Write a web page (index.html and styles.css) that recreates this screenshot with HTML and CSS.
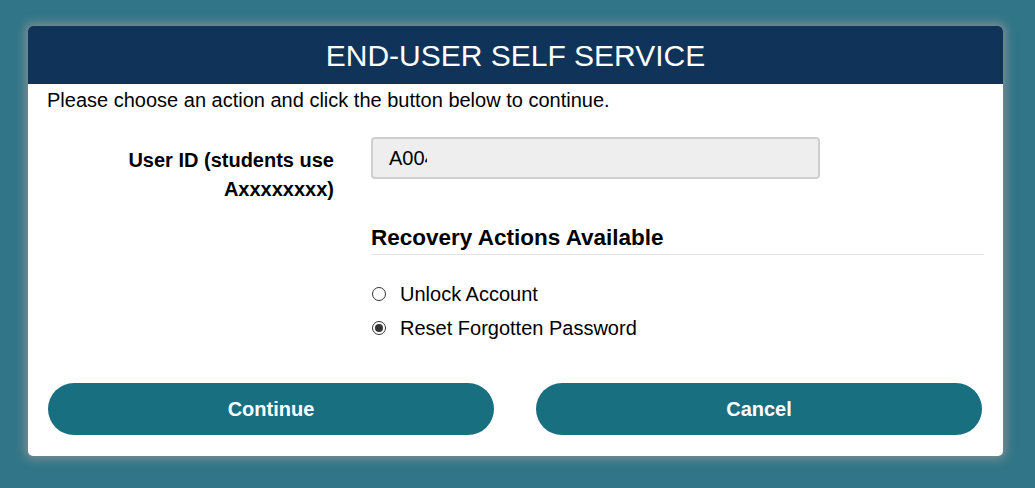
FILE: index.html
```html
<!DOCTYPE html>
<html lang="en">
<head>
<meta charset="utf-8">
<title>End-User Self Service</title>
<link rel="stylesheet" href="styles.css">
</head>
<body>
<div class="card">
  <div class="card-header">END-USER SELF SERVICE</div>
  <div class="card-body">
    <p class="intro">Please choose an action and click the button below to continue.</p>
    <div class="form-row first">
      <label class="field-label" for="uid">User ID (students use Axxxxxxxx)</label>
      <div class="field-main">
        <div class="input-box" id="uid">A00<span class="cut">4</span></div>
      </div>
    </div>
    <div class="form-row">
      <div class="field-spacer"></div>
      <div class="field-main">
        <h3 class="section-title">Recovery Actions Available</h3>
        <div class="radios">
          <label class="radio"><span class="dot"></span>Unlock Account</label>
          <label class="radio"><span class="dot checked"></span>Reset Forgotten Password</label>
        </div>
      </div>
    </div>
    <div class="buttons">
      <button class="btn">Continue</button>
      <button class="btn">Cancel</button>
    </div>
  </div>
</div>
</body>
</html>
```

FILE: styles.css
```css
html, body {
  margin: 0;
  padding: 0;
}
body {
  background: #317688;
  font-family: "Liberation Sans", Arial, sans-serif;
  color: #000;
  padding: 26px 32px 0 28px;
  height: 488px;
  box-sizing: border-box;
  overflow: hidden;
}
.card {
  width: 975px;
  height: 430px;
  background: #fff;
  border-radius: 5px;
  box-shadow: 0 0 10px 3px rgba(150, 150, 150, 0.75);
  overflow: hidden;
  display: flex;
  flex-direction: column;
}
.card-header {
  background: #0f3359;
  color: #fff;
  height: 58px;
  display: flex;
  align-items: center;
  justify-content: center;
  font-size: 30px;
  padding-top: 1px;
  box-sizing: border-box;
}
.card-body {
  padding: 0 19px 0 19px;
}
.intro {
  margin: 4px 0 0 0;
  font-size: 20px;
  line-height: 24px;
}
.form-row {
  display: grid;
  grid-template-columns: 287px 1fr;
  column-gap: 37px;
}
.form-row.first {
  margin-top: 25px;
}
.field-label {
  font-weight: bold;
  font-size: 20px;
  line-height: 29px;
  text-align: right;
  padding-top: 9px;
}
.input-box {
  width: 449px;
  height: 42px;
  box-sizing: border-box;
  background: #eeeeee;
  border: 2px solid #cfcfcf;
  border-radius: 4px;
  font-size: 20px;
  line-height: 38px;
  padding-left: 16px;
}
.cut {
  display: inline-block;
  width: 2px;
  overflow: hidden;
  vertical-align: top;
}
.section-title {
  margin: 20px 0 0 0;
  font-size: 22.5px;
  line-height: 27px;
  font-weight: bold;
  padding-bottom: 3px;
  border-bottom: 1px solid #e5e5e5;
}
.radios {
  margin-top: 27px;
  display: flex;
  flex-direction: column;
  gap: 10px;
}
.radio {
  display: flex;
  align-items: center;
  font-size: 20px;
  line-height: 24px;
}
.dot {
  width: 12px;
  height: 12px;
  border: 1px solid #333;
  border-radius: 50%;
  margin-right: 14px;
  margin-left: 1px;
  display: inline-flex;
  align-items: center;
  justify-content: center;
  box-sizing: content-box;
}
.dot.checked::after {
  content: "";
  width: 8px;
  height: 8px;
  border-radius: 50%;
  background: #333;
}
.buttons {
  margin-top: 43px;
  display: flex;
  gap: 42px;
  padding-left: 1px;
}
.btn {
  width: 446px;
  height: 52px;
  border: none;
  border-radius: 26px;
  background: #186f80;
  color: #fff;
  font-family: "Liberation Sans", Arial, sans-serif;
  font-weight: bold;
  font-size: 20px;
  cursor: pointer;
}
```
